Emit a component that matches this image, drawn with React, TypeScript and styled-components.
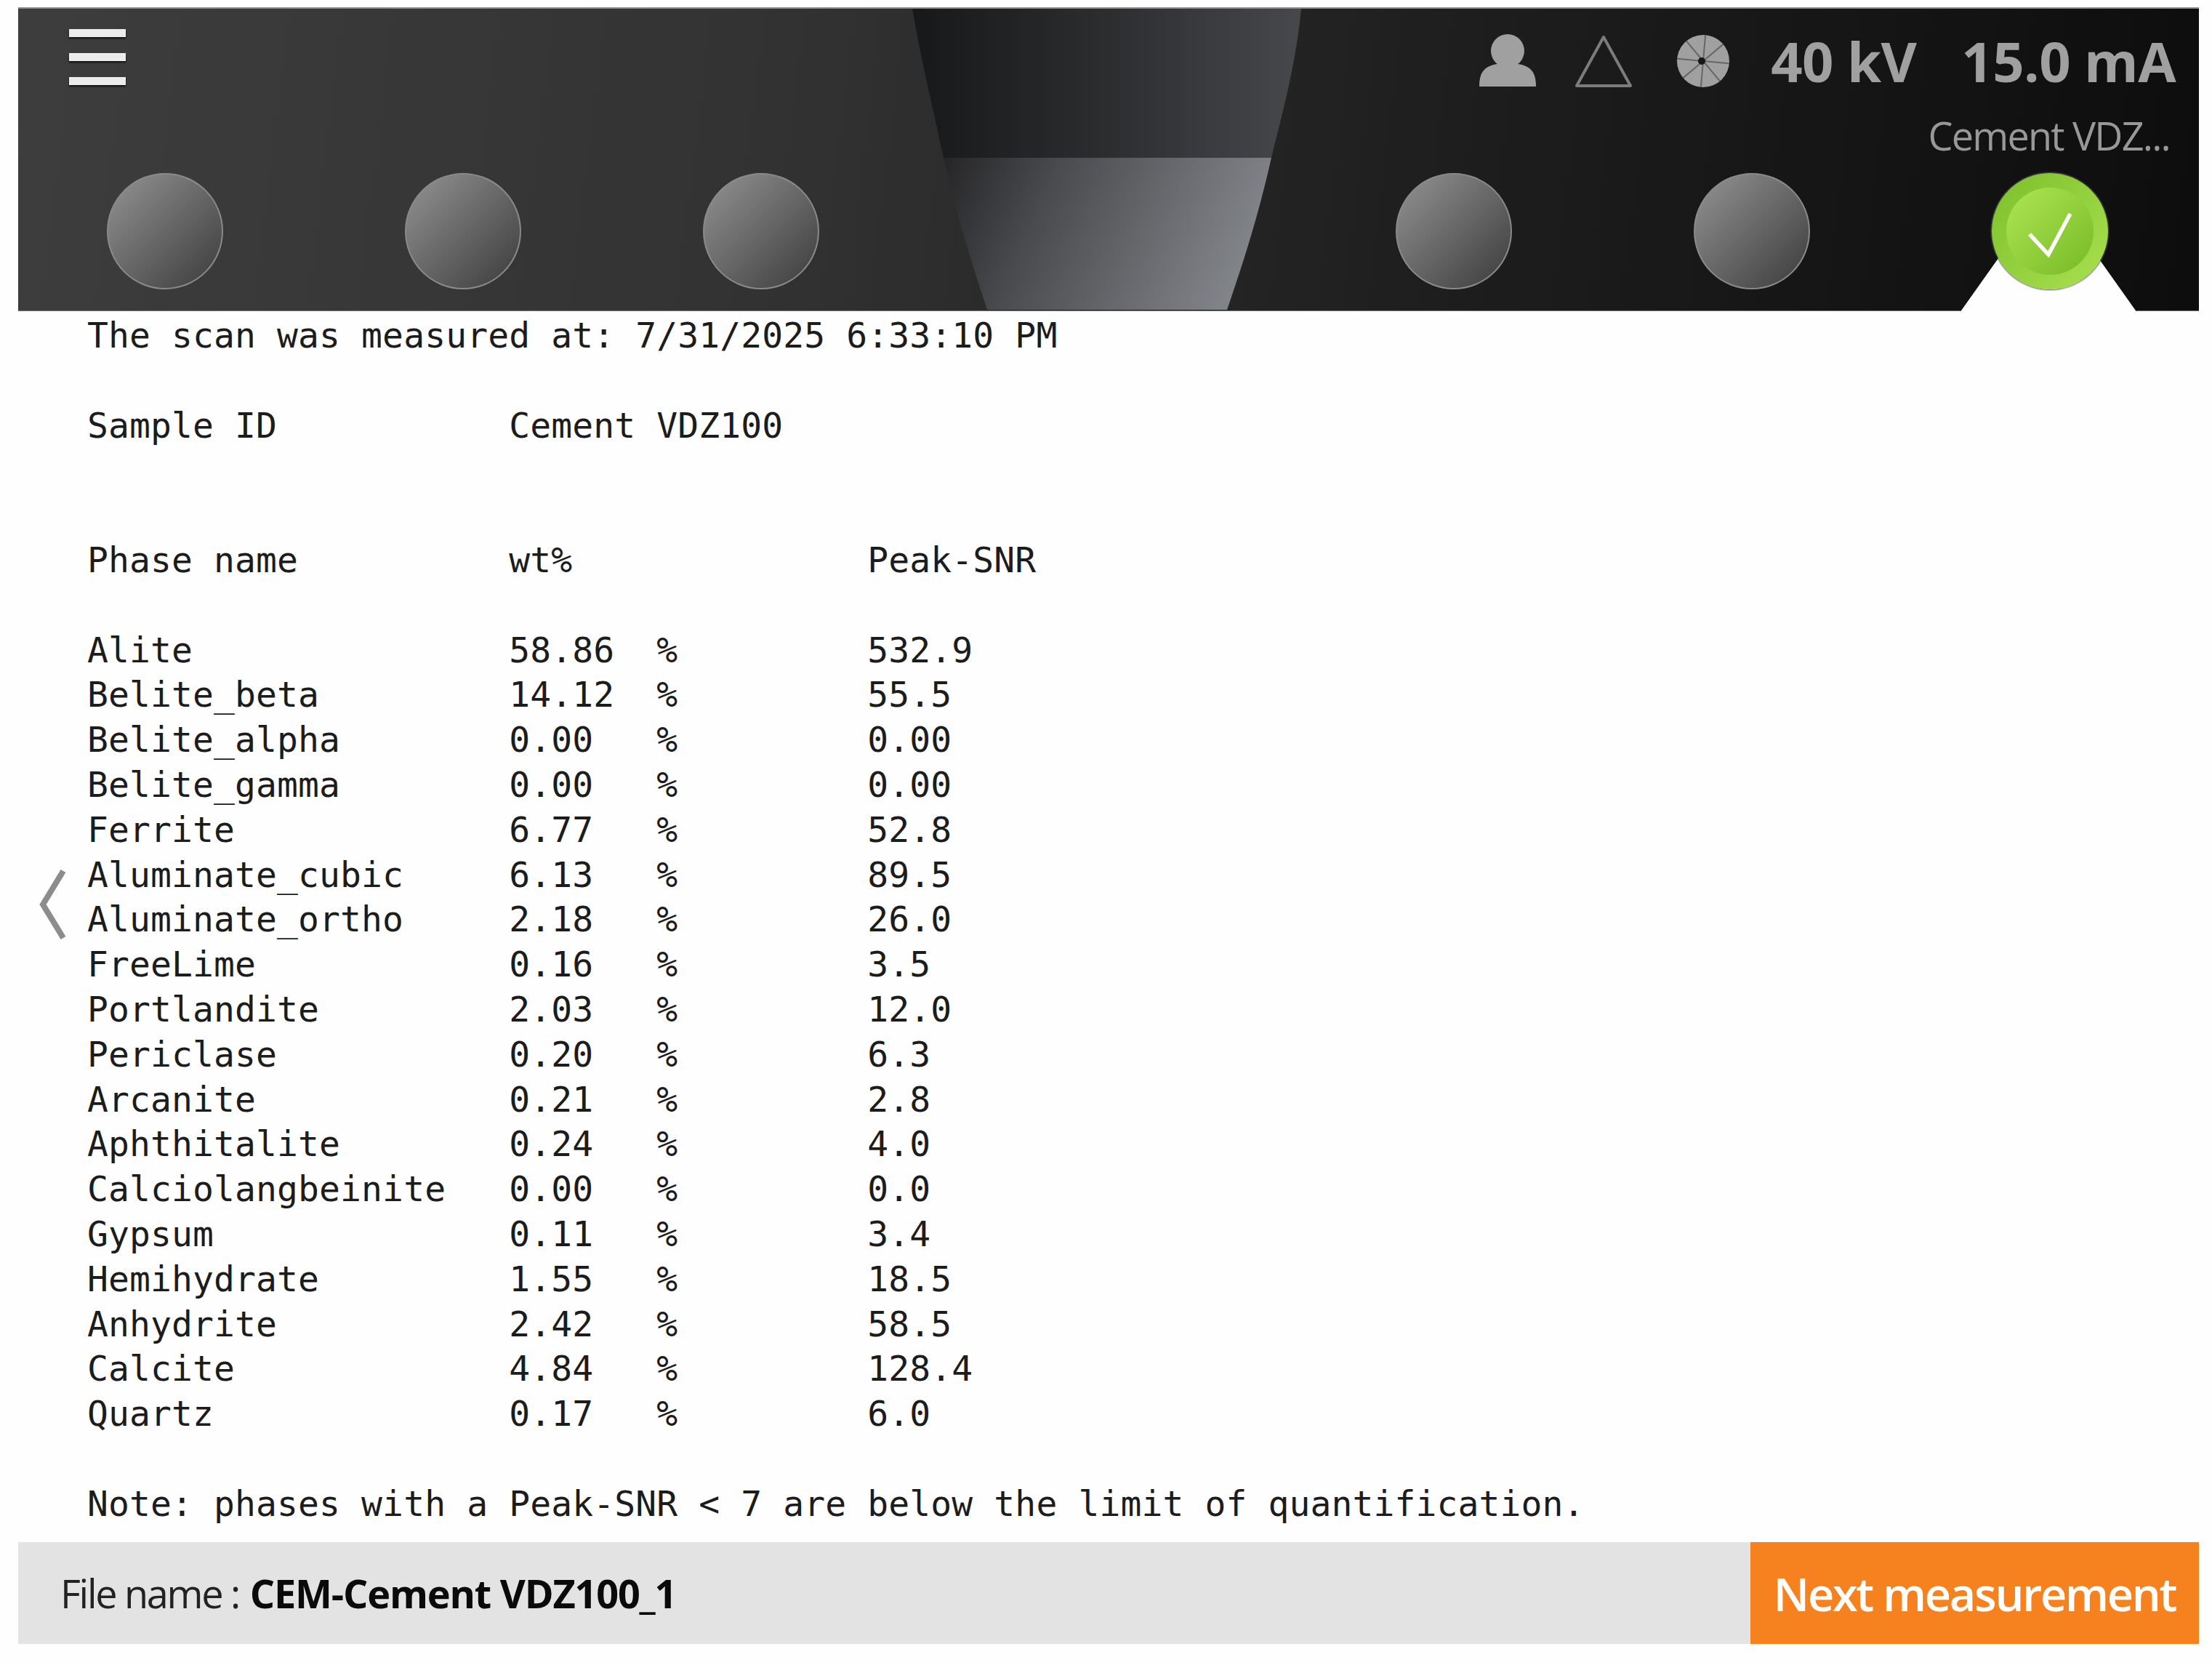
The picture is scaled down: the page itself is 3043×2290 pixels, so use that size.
import { createGlobalStyle, styled } from 'styled-components';

const GlobalStyle = createGlobalStyle`
  html, body {
    margin: 0;
    padding: 0;
    background: #fefefe;
  }
`;

const Page = styled.div`
  width: 3000px;
  margin-left: 25px;
  padding-top: 10px;
  font-family: "Open Sans", "Liberation Sans", sans-serif;
`;

const Header = styled.header`
  position: relative;
  height: 418px;
  overflow: hidden;
  background: linear-gradient(97deg, #3d3d3d 0%, #323232 35%, #1e1e1e 65%, #0d0d0d 100%);
  border-top: 2px solid #8c8c8c;
  box-sizing: border-box;
`;

const Decor = styled.svg`
  position: absolute;
  left: 0;
  top: 0;
`;

const TopRow = styled.div`
  position: relative;
  display: flex;
  justify-content: space-between;
  height: 226px;
  padding: 28px 32px 0 70px;
  box-sizing: border-box;
`;

const Menu = styled.div`
  display: flex;
  flex-direction: column;
  gap: 22px;
  width: 78px;
`;

const MenuBar = styled.span`
  height: 11px;
  background: #ececec;
  box-shadow: 0 2px 2px #111;
`;

const Status = styled.div`
  display: flex;
  flex-direction: column;
  align-items: flex-end;
  margin-top: 4px;
`;

const Readouts = styled.div`
  display: flex;
  align-items: center;
  height: 80px;
  color: #a0a0a0;
`;

const Icon = styled.svg<{ $gap: number }>`
  display: block;
  margin-right: ${(p) => p.$gap}px;
`;

const Reading = styled.span<{ $gap?: number }>`
  font-size: 76px;
  font-weight: 700;
  line-height: 80px;
  letter-spacing: -0.6px;
  margin-right: ${(p) => p.$gap ?? 0}px;
  white-space: nowrap;
`;

const SampleName = styled.div`
  margin-top: 32px;
  margin-right: 8px;
  font-size: 54px;
  line-height: 60px;
  letter-spacing: -1.8px;
  color: #989898;
`;

const Steps = styled.div`
  position: relative;
  display: flex;
  justify-content: space-between;
  padding: 0 125px 0 122px;
`;

const StepGroup = styled.div`
  display: flex;
  gap: 250px;
`;

const Step = styled.div`
  width: 160px;
  height: 160px;
  border-radius: 50%;
  box-sizing: border-box;
  border: 2px solid #8a8a8a;
  background: linear-gradient(135deg, #8a8a8a 10%, #444 90%);
`;

const DoneStep = styled.div`
  position: relative;
  display: flex;
  align-items: center;
  justify-content: center;
  width: 160px;
  height: 160px;
  border-radius: 50%;
  box-sizing: border-box;
  background: linear-gradient(135deg, #83c431 15%, #a3dc4b 85%);
  box-shadow: 0 0 2px 1px #555;
`;

const DoneInner = styled.div`
  display: flex;
  align-items: center;
  justify-content: center;
  width: 120px;
  height: 120px;
  border-radius: 50%;
  background: linear-gradient(135deg, #a6df4e 15%, #7fc02d 85%);
`;

const Report = styled.pre`
  position: relative;
  margin: 0;
  padding: 3px 0 0 95px;
  height: 1693px;
  box-sizing: border-box;
  font-family: "DejaVu Sans Mono", "Liberation Mono", monospace;
  font-size: 48px;
  line-height: 61.8px;
  letter-spacing: 0.11px;
  color: #1c1c1c;
`;

const BackArrow = styled.svg`
  position: absolute;
  left: 28px;
  top: 766px;
`;

const Footer = styled.footer`
  display: flex;
  align-items: stretch;
  justify-content: space-between;
  height: 140px;
  background: #e3e3e3;
`;

const FileName = styled.div`
  display: flex;
  align-items: center;
  gap: 15px;
  padding-left: 58px;
  font-size: 54px;
  letter-spacing: -2.3px;
  color: #222;
`;

const FileValue = styled.strong`
  font-weight: 700;
  letter-spacing: -1.2px;
  color: #0a0a0a;
`;

const NextButton = styled.button`
  width: 617px;
  border: none;
  background: #f5821f;
  color: #fff;
  font-family: inherit;
  font-size: 63px;
  font-weight: 600;
  letter-spacing: -2.3px;
  white-space: nowrap;
  padding: 0;
`;

const phases: [string, string, string][] = [
  ['Alite', '58.86', '532.9'],
  ['Belite_beta', '14.12', '55.5'],
  ['Belite_alpha', '0.00', '0.00'],
  ['Belite_gamma', '0.00', '0.00'],
  ['Ferrite', '6.77', '52.8'],
  ['Aluminate_cubic', '6.13', '89.5'],
  ['Aluminate_ortho', '2.18', '26.0'],
  ['FreeLime', '0.16', '3.5'],
  ['Portlandite', '2.03', '12.0'],
  ['Periclase', '0.20', '6.3'],
  ['Arcanite', '0.21', '2.8'],
  ['Aphthitalite', '0.24', '4.0'],
  ['Calciolangbeinite', '0.00', '0.0'],
  ['Gypsum', '0.11', '3.4'],
  ['Hemihydrate', '1.55', '18.5'],
  ['Anhydrite', '2.42', '58.5'],
  ['Calcite', '4.84', '128.4'],
  ['Quartz', '0.17', '6.0'],
];

const reportText = [
  'The scan was measured at: 7/31/2025 6:33:10 PM',
  '',
  'Sample ID'.padEnd(20) + 'Cement VDZ100',
  '',
  '',
  'Phase name'.padEnd(20) + 'wt%'.padEnd(17) + 'Peak-SNR',
  '',
  ...phases.map(([name, wt, snr]) => name.padEnd(20) + wt.padEnd(7) + '%'.padEnd(10) + snr),
  '',
  'Note: phases with a Peak-SNR < 7 are below the limit of quantification.',
].join('\n');

const spokes = [5, 50, 95, 140, 185, 230, 275, 320];

const App = () => (
  <>
    <GlobalStyle />
    <Page>
      <Header>
        <Decor width="3000" height="416" viewBox="0 0 3000 416">
          <defs>
            <linearGradient id="funnelTop" x1="0" y1="0" x2="1" y2="0">
              <stop offset="0" stopColor="#17181a" />
              <stop offset="0.5" stopColor="#2c2d2f" />
              <stop offset="1" stopColor="#47484b" />
            </linearGradient>
            <linearGradient id="funnelLow" x1="0" y1="0" x2="1" y2="0.2">
              <stop offset="0" stopColor="#252527" />
              <stop offset="0.35" stopColor="#4a4b4f" />
              <stop offset="1" stopColor="#808388" />
            </linearGradient>
          </defs>
          <path d="M1230 0 H1765 C1758 75 1740 140 1724 205 H1273 C1257 130 1242 70 1230 0 Z" fill="url(#funnelTop)" />
          <path d="M1273 205 H1724 C1706 285 1685 350 1663 414 H1333 C1310 345 1290 280 1273 205 Z" fill="url(#funnelLow)" />
          <path d="M2671 418 L2793 246 L2915 418 Z" fill="#fefefe" />
          <path d="M0 415.5 H2672 M2914 415.5 H3000" stroke="#6e6e6e" strokeWidth="1" />
        </Decor>
        <TopRow>
          <Menu>
            <MenuBar />
            <MenuBar />
            <MenuBar />
          </Menu>
          <Status>
            <Readouts>
              <Icon $gap={52} width="80" height="74" viewBox="0 0 80 74" fill="#a0a0a0">
                <ellipse cx="40" cy="23" rx="23" ry="23" />
                <path d="M1 72 C1 52 8 44 26 41 H54 C72 44 79 52 79 72 Z" />
              </Icon>
              <Icon $gap={60} width="80" height="74" viewBox="0 0 80 74">
                <path d="M40 4 L77 71 H3 Z" fill="none" stroke="#7c7c7c" strokeWidth="4" strokeLinejoin="round" />
              </Icon>
              <Icon $gap={56} width="74" height="74" viewBox="0 0 74 74">
                <circle cx="37" cy="37" r="36" fill="#a0a0a0" />
                {spokes.map((a) => (
                  <line key={a} x1="37" y1="37" x2="37" y2="1" stroke="#666" strokeWidth="2" transform={`rotate(${a} 37 37)`} />
                ))}
                <circle cx="35" cy="37" r="5" fill="#161616" />
              </Icon>
              <Reading $gap={62}>40 kV</Reading>
              <Reading>15.0 mA</Reading>
            </Readouts>
            <SampleName>Cement VDZ...</SampleName>
          </Status>
        </TopRow>
        <Steps>
          <StepGroup>
            <Step />
            <Step />
            <Step />
          </StepGroup>
          <StepGroup>
            <Step />
            <Step />
            <DoneStep>
              <DoneInner>
                <svg width="64" height="72" viewBox="0 0 64 72" fill="none">
                  <path d="M4 40 L30 68 L60 12" stroke="#fff" strokeWidth="5.5" />
                </svg>
              </DoneInner>
            </DoneStep>
          </StepGroup>
        </Steps>
      </Header>
      <Report>
        {reportText}
        <BackArrow width="40" height="100" viewBox="0 0 40 100" fill="none">
          <path d="M34 4 L6 50 L34 96" stroke="#8c8c8c" strokeWidth="8" />
        </BackArrow>
      </Report>
      <Footer>
        <FileName>
          <span>File name :</span>
          <FileValue>CEM-Cement VDZ100_1</FileValue>
        </FileName>
        <NextButton>Next measurement</NextButton>
      </Footer>
    </Page>
  </>
);

export default App;
